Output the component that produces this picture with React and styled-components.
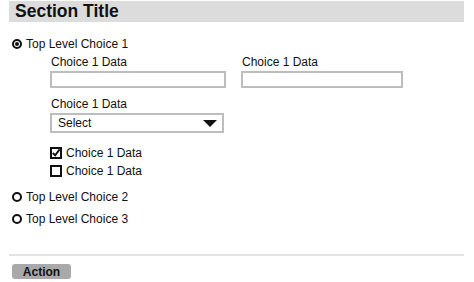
import React from "react";
import styled, { createGlobalStyle } from "styled-components";

const Global = createGlobalStyle`
  html, body { margin: 0; padding: 0; background: #fff; }
  body { font-family: "Liberation Sans", Arial, sans-serif; color: #111; }
`;

const Page = styled.div`
  width: 455px;
  margin-left: 9px;
  padding-top: 1px;
`;

const Header = styled.div`
  height: 21px;
  background: #dcdcdc;
  padding-left: 6px;
  display: flex;
  align-items: center;
  font-size: 17.5px;
  font-weight: bold;
  color: #111;
`;

const Body = styled.div`
  padding-top: 14px;
  height: 234px;
  border-bottom: 2px solid #e2e2e2;
  box-sizing: border-box;
`;

const RadioRow = styled.label`
  display: flex;
  align-items: center;
  gap: 4px;
  margin-left: 3px;
  height: 16px;
  font-size: 12px;
  margin-bottom: ${(p) => p.$mb || 0}px;
`;

const Radio = styled.span`
  width: 10px;
  height: 10px;
  box-sizing: border-box;
  border: 2px solid #111;
  border-radius: 50%;
  display: flex;
  align-items: center;
  justify-content: center;
  &::after {
    content: "";
    width: 4px;
    height: 4px;
    border-radius: 50%;
    background: ${(p) => (p.$checked ? "#111" : "transparent")};
  }
`;

const Sub = styled.div`
  margin-left: 41px;
  padding-top: 3px;
  padding-bottom: 9px;
`;

const FieldGrid = styled.div`
  display: grid;
  grid-template-columns: 176px 162px;
  column-gap: 15px;
`;

const Field = styled.div`
  display: flex;
  flex-direction: column;
  margin-bottom: ${(p) => p.$mb || 0}px;
`;

const Label = styled.div`
  font-size: 12px;
  height: 14px;
  line-height: 14px;
  margin-left: 1px;
  margin-bottom: 2px;
`;

const Input = styled.div`
  height: 17px;
  box-sizing: border-box;
  border: 2px solid #bdbdbd;
  background: #fff;
`;

const Select = styled.div`
  width: 174px;
  height: 20px;
  box-sizing: border-box;
  border: 2px solid #bdbdbd;
  display: flex;
  align-items: center;
  justify-content: space-between;
  padding: 0 5px 0 6px;
  font-size: 12px;
`;

const Arrow = styled.span`
  width: 0;
  height: 0;
  border-left: 7px solid transparent;
  border-right: 7px solid transparent;
  border-top: 7px solid #111;
`;

const CheckRow = styled.div`
  display: flex;
  align-items: center;
  gap: 4px;
  height: 18px;
  font-size: 12px;
`;

const Box = styled.span`
  width: 12px;
  height: 12px;
  box-sizing: border-box;
  border: 2px solid #111;
  display: flex;
  align-items: center;
  justify-content: center;
`;

const Footer = styled.div`
  padding: 8px 0 0 3px;
`;

const Button = styled.button`
  width: 59px;
  height: 15px;
  border: none;
  border-radius: 3px;
  background: #a9a9a9;
  font-family: "Liberation Sans", Arial, sans-serif;
  font-size: 12px;
  font-weight: bold;
  color: #111;
  padding: 0;
  display: flex;
  align-items: center;
  justify-content: center;
`;

export default function App() {
  return (
    <>
      <Global />
      <Page>
        <Header>Section Title</Header>
        <Body>
          <RadioRow>
            <Radio $checked />
            Top Level Choice 1
          </RadioRow>
          <Sub>
            <FieldGrid>
              <Field $mb={9}>
                <Label>Choice 1 Data</Label>
                <Input />
              </Field>
              <Field>
                <Label>Choice 1 Data</Label>
                <Input />
              </Field>
            </FieldGrid>
            <Field $mb={11}>
              <Label>Choice 1 Data</Label>
              <Select>
                Select
                <Arrow />
              </Select>
            </Field>
            <CheckRow>
              <Box>
                <svg width="10" height="10" viewBox="0 0 10 10">
                  <path d="M1 5 L4 8 L9.5 0.5" stroke="#111" strokeWidth="2.4" fill="none" />
                </svg>
              </Box>
              Choice 1 Data
            </CheckRow>
            <CheckRow>
              <Box />
              Choice 1 Data
            </CheckRow>
          </Sub>
          <RadioRow $mb={6}>
            <Radio />
            Top Level Choice 2
          </RadioRow>
          <RadioRow>
            <Radio />
            Top Level Choice 3
          </RadioRow>
        </Body>
        <Footer>
          <Button>Action</Button>
        </Footer>
      </Page>
    </>
  );
}
